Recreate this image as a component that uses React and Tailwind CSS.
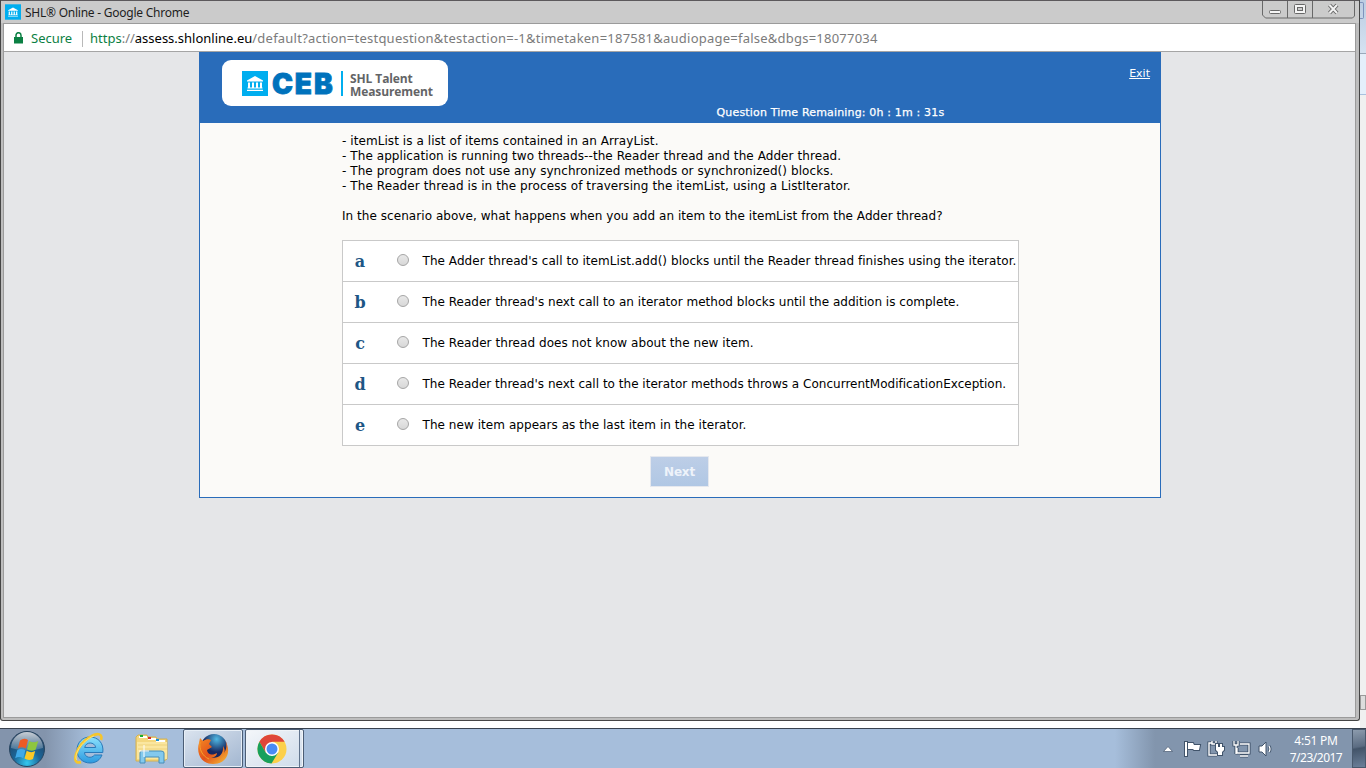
const options = [
  ['a', "The Adder thread's call to itemList.add() blocks until the Reader thread finishes using the iterator.", 'tracking-[0.055px]'],
  ['b', "The Reader thread's next call to an iterator method blocks until the addition is complete.", 'tracking-[0.020px]'],
  ['c', 'The Reader thread does not know about the new item.', 'tracking-[0.050px]'],
  ['d', "The Reader thread's next call to the iterator methods throws a ConcurrentModificationException.", 'tracking-[0.015px]'],
  ['e', 'The new item appears as the last item in the iterator.', 'tracking-[0.055px]'],
];

const facts = [
  ['- itemList is a list of items contained in an ArrayList.', 'tracking-[0.070px]'],
  ['- The application is running two threads--the Reader thread and the Adder thread.', 'tracking-[0.075px]'],
  ['- The program does not use any synchronized methods or synchronized() blocks.', 'tracking-[0.065px]'],
  ['- The Reader thread is in the process of traversing the itemList, using a ListIterator.', 'tracking-[0.090px]'],
];

function Temple({ className }) {
  return (
    <svg viewBox="0 0 26 25" className={className}>
      <rect width="26" height="25" fill="#00aeef" />
      <path d="M5 9.500 13 5l8 4.500v1H5zM6 11.500h2v5H6zM10 11.500h2v5h-2zM14 11.500h2v5h-2zM18 11.500h2v5h-2zM5.500 16.500h15v1h-15zM5 18.700h16v1.300H5z" fill="#fff" />
    </svg>
  );
}

function TitleBar() {
  return (
    <div className="flex h-[23px] shrink-0 items-start border-t border-[#5c595c] bg-[#cbcbcb] pl-[4px]">
      <Temple className="mt-[3px] h-4 w-4" />
      <span className="ml-[4px] mt-[3px] font-['Noto_Sans'] text-[12px] leading-[17px] tracking-[-0.240px] text-[#1e1e1e] whitespace-nowrap">SHL® Online - Google Chrome</span>
      <svg className="ml-auto mr-[3px] h-[18px] w-[94px]" viewBox="0 0 94 18" fill="none" stroke="#686868">
        <path d="M.5 0v14l3 3h87l2-2V0M25.500 0v17M50.500 0v17" />
        <rect x="7.500" y="9.500" width="11" height="3" rx="1" fill="#f5f5f5" />
        <rect x="32.500" y="3.500" width="11" height="9" rx="1" fill="#f5f5f5" />
        <rect x="35.500" y="6.500" width="5" height="3" fill="#ccc" />
        <path d="m67.500 4 7.500 8m0-8-7.500 8" strokeWidth="4" />
        <path d="m67.500 4 7.500 8m0-8-7.500 8" stroke="#f3f3f3" strokeWidth="2" />
      </svg>
    </div>
  );
}

function AddressBar() {
  return (
    <div className="flex h-[27px] shrink-0 items-center bg-white pl-[10px] pt-[2px] font-['Noto_Sans'] text-[13px]">
      <svg className="mb-px h-[12px] w-[9px]" viewBox="0 0 9 12"><path d="M0 5h9v6.500H0z" fill="#0b8043" /><path d="M2 5V3.200a2.500 2.500 0 0 1 5 0V5" fill="none" stroke="#0b8043" strokeWidth="1.500" /></svg>
      <span className="ml-[8px] w-[42px] text-[#0b8043]">Secure</span>
      <span className="ml-[9px] h-4 w-px bg-[#b9b9b9]" />
      <span className="ml-[7px] text-[#7b7b7b] whitespace-nowrap">
        <span className="text-[#0b8043]">https</span>://<span className="text-black">assess.shlonline.eu</span><span className="tracking-[0.230px]">/default?action=testquestion&amp;testaction=-1&amp;timetaken=187581&amp;audiopage=false&amp;dbgs=18077034</span>
      </span>
    </div>
  );
}

function Header() {
  return (
    <div className="flex h-[71px] items-start bg-[#296cba] pl-[23px] pr-[11px] text-white">
      <div className="mt-[8px] flex h-[46px] w-[226px] shrink-0 items-center rounded-[9px] bg-white pl-5">
        <Temple className="h-[25px] w-[26px]" />
        <span className="ml-[4px] mt-[3px] w-[62px] font-[Inter] text-[28px] font-black leading-[25px] tracking-[1.900px] text-[#0072bc] [-webkit-text-stroke:0.8px_#0072bc]">CEB</span>
        <span className="ml-[7px] h-[25px] w-[2px] bg-[#00aeef]" />
        <span className="ml-[7px] mt-[4px] flex flex-col font-['Open_Sans'] text-[12px] font-bold leading-[13px] tracking-[-0.100px] text-[#636466]"><span>SHL Talent</span><span>Measurement</span></span>
      </div>
      <div className="ml-[268.500px] mt-[54px] font-['DejaVu_Sans'] text-[11px] leading-[14px] tracking-[0.165px] whitespace-nowrap [-webkit-text-stroke:0.25px_white]">Question Time Remaining: 0h : 1m : 31s</div>
      <a className="ml-auto mt-[15px] font-['DejaVu_Sans'] text-[11px] leading-[14px] underline">Exit</a>
    </div>
  );
}

function Question() {
  return (
    <div className="w-[962px] border border-t-0 border-[#296cba] bg-[#fbfaf8]">
      <div className="-mx-px"><Header /></div>
      <div className="flex h-[374px] flex-col items-start pl-[142px] pt-[11px] font-['DejaVu_Sans'] text-[12px] leading-[15px] text-black">
        {facts.map(([f, spacing]) => <p key={f} className={`whitespace-nowrap ${spacing}`}>{f}</p>)}
        <p className="mt-[15px] whitespace-nowrap tracking-[0.050px]">In the scenario above, what happens when you add an item to the itemList from the Adder thread?</p>
        <div className="mt-[16px] w-[677px] border border-b-0 border-[#c9c9c9] bg-white">
          {options.map(([k, t, spacing]) => (
            <div key={k} className="flex h-[41px] items-center border-b border-[#c9c9c9]">
              <b className="w-[34px] text-center font-['DejaVu_Serif'] text-[16px] text-[#1d5685]">{k}</b>
              <span className="mb-[2px] ml-[20px] h-[12px] w-[12px] rounded-full border border-[#a5a5a5] bg-linear-to-b from-[#e8e8e8] to-[#d8d8d8]" />
              <span className={`ml-[13.500px] whitespace-nowrap ${spacing}`}>{t}</span>
            </div>
          ))}
        </div>
        <button className="ml-[308px] mt-[10px] h-[31px] w-[59px] border border-[#e5e8ee] bg-linear-to-b from-[#bdcee7] to-[#b0c7e4] pt-[2px] text-[12px] font-bold tracking-[-0.200px] text-[#eef3fa]">Next</button>
      </div>
    </div>
  );
}

function StartOrb() {
  return (
    <svg className="ml-[8px] h-[38px] w-[38px]" viewBox="0 0 38 38">
      <defs>
        <radialGradient id="orb" cx=".5" cy=".9" r=".85"><stop offset="0" stopColor="#35c8ef" /><stop offset=".45" stopColor="#1b6597" /><stop offset="1" stopColor="#233f60" /></radialGradient>
        <linearGradient id="gloss" x2="0" y2="1"><stop stopColor="#fff" stopOpacity=".75" /><stop offset="1" stopColor="#fff" stopOpacity=".15" /></linearGradient>
      </defs>
      <circle cx="19" cy="19" r="17.500" fill="url(#orb)" stroke="#284560" />
      <path d="M3 18a16 16 0 0 1 32 0q-16 5-32 0" fill="url(#gloss)" />
      <path d="M12 10.500q4-3 8-.5l-2.200 8.500q-4-2.500-8 0z" fill="#ed5a24" />
      <path d="M21.200 11q4.500 2.500 9 0l-2.500 8.500q-4.500 2.500-8.700-.3z" fill="#8ec63f" />
      <path d="M9.200 20.200q4-2.500 8.200 0l-2.200 8q-4-2.500-8 0z" fill="#3fa9e8" />
      <path d="M18.700 20.800q4.300 2.500 8.500.3l-2.200 8q-4.300 2.200-8.500-.5z" fill="#fbc926" />
    </svg>
  );
}

function Explorer() {
  return (
    <svg className="ml-[26px] h-[34px] w-[36px]" viewBox="0 0 36 34">
      <defs><linearGradient id="ie" x2="0" y2="1"><stop stopColor="#8be1fc" /><stop offset="1" stopColor="#2c9ae0" /></linearGradient></defs>
      <path fillRule="evenodd" d="M18 5C10 5 5 11 5 18c0 8 6 13 13 13 6 0 10-3 12-8h-7.500c-3 4-10 2.500-10-2.500h18.300C32 11 26 5 18 5m-5.300 10.500c1-6 10-6 11 0z" fill="url(#ie)" stroke="#2979b9" />
      <path d="M9 30C-2 34 4 13 18 5c8-5 13-3 11 3" fill="none" stroke="#f5c52c" strokeWidth="2.600" />
      <path d="M5 28C1 24 9 9 22 4" fill="none" stroke="#fff09b" strokeWidth=".7" />
    </svg>
  );
}

function Folder() {
  return (
    <svg className="ml-[27px] h-[32px] w-[34px]" viewBox="0 0 34 32">
      <path d="M1 4l2-2h9l1 2h8l1 2h10v20l-3 2H1z" fill="#f4d77d" stroke="#d3b151" />
      <path d="M4 4h8M13 6h8M21 8h9" stroke="#fff" strokeWidth="2" />
      <path d="M5 3h3" stroke="#1aae2d" strokeWidth="2" /><path d="M13 5h3" stroke="#d82b22" strokeWidth="2" /><path d="M21 7h3" stroke="#1691d8" strokeWidth="2" />
      <path d="M2 9h30v17H2z" fill="#fae69f" /><path d="M3 12h29M3 16h29" stroke="#eed27b" />
      <path d="M5 30V20q0-2 2-2h19q3 0 3 2v10h-5v-6H10v6z" fill="#83c9ed" stroke="#468eba" />
      <path d="M9 12v12M4 18h10" stroke="#fff" />
    </svg>
  );
}

function Firefox() {
  return (
    <svg className="h-8 w-8" viewBox="0 0 32 32">
      <defs><radialGradient id="globe" cx=".6" cy=".2"><stop stopColor="#50b9e4" /><stop offset="1" stopColor="#17275f" /></radialGradient><linearGradient id="fox" x2="1" y2="1"><stop stopColor="#f58b22" /><stop offset=".5" stopColor="#e2511b" /><stop offset="1" stopColor="#f7c437" /></linearGradient></defs>
      <circle cx="17" cy="14" r="13" fill="url(#globe)" />
      <path d="M3 5l3 3c3-2 6-2 8-1l-2 4 3 3-5 3c1 6 7 5 10 3 0 3-3 5-7 4 8 3 14-3 13-11 2 3 2 5 1 7 3-4 3-9 1-13 7 12 2 24-12 24C4 31-1 20 2 10z" fill="url(#fox)" />
      <path d="M3 9c-1 7 2 14 9 17" stroke="#f7a12c" fill="none" />
    </svg>
  );
}

function Chrome() {
  return (
    <svg className="h-[30px] w-[30px]" viewBox="0 0 30 30">
      <circle cx="15" cy="15" r="14.500" fill="#fcd04b" />
      <path d="M2.400 7.700A14.500 14.500 0 0 1 27.600 7.800H15L8.700 18.600z" fill="#df4639" />
      <path d="M2.400 7.700A14.500 14.500 0 0 0 14.500 29.500l6.700-11-12.500.1z" fill="#17a05c" />
      <circle cx="15" cy="15" r="7" fill="#fff" /><circle cx="15" cy="15" r="5.500" fill="#4a8bf4" />
    </svg>
  );
}

function Tray() {
  return (
    <svg className="h-[20px] w-[112px]" viewBox="0 0 112 20" fill="none">
      <path d="m.5 12.500 4.500-5 4.500 5z" fill="#fff" stroke="#475970" strokeWidth=".7" />
      <path d="M22 3h2v14h-2zM25 4h5l1 2h6l-1 5h-5l-1-1h-5z" fill="#fff" stroke="#40536a" strokeWidth="2" paintOrder="stroke" />
      <path d="M49 4h-3v12h8M49 2v3h4V2" stroke="#40536a" strokeWidth="3.200" />
      <path d="M49 4h-3v12h8M49 2v3h4V2" stroke="#fff" strokeWidth="1.400" />
      <path d="M53 5h2v3h2V5h2v3h2v3l-2 2v3h-4v-3l-2-2z" fill="#fff" stroke="#40536a" strokeWidth="2" paintOrder="stroke" />
      <path d="M77 5h9v9H74V9M77 17h8M71 2v4h4V2M73 6v9" stroke="#40536a" strokeWidth="3.200" />
      <path d="M77 5h9v9H74V9M77 17h8M71 2v4h4V2M73 6v9" stroke="#fff" strokeWidth="1.300" />
      <path d="M96 7h3l4-4v14l-4-4h-3z" fill="#fff" stroke="#40536a" />
      <path d="M106 7q2 3 0 6" stroke="#40536a" strokeWidth="3" /><path d="M106 7q2 3 0 6" stroke="#fff" strokeWidth="1.200" />
    </svg>
  );
}

function Taskbar() {
  return (
    <div className="flex h-10 w-full shrink-0 items-center border-t border-[#38424f] bg-[linear-gradient(to_right,#8394ac_0,#8394ac_45px,#a6bedb_90px,#a6bedb_1115px,#8295ad_1155px)]">
      <StartOrb /><Explorer /><Folder />
      <div className="ml-[14px] flex h-[39px] w-[60px] items-center justify-center rounded-[2px] border border-[#4b5d75] bg-linear-to-br from-[#dbe4ef] to-[#a2b6d0] shadow-[inset_0_0_0_1px_#e6eef6]"><Firefox /></div>
      <div className="ml-[2px] flex h-[39px] w-[59px] items-center rounded-[2px] border border-[#4b5d75] bg-linear-to-br from-[#f4f7fa] to-[#cedbea] shadow-[inset_0_0_0_1px_#f0f4f8]">
        <span className="flex w-[53px] justify-center pr-[2px]"><Chrome /></span><span className="h-full w-px bg-[#60738c]" />
      </div>
      <div className="ml-auto"><Tray /></div>
      <div className="ml-[11px] w-[60px] text-center font-['Noto_Sans'] text-[12px] leading-[17px] text-white whitespace-nowrap"><div className="tracking-[-0.250px]">4:51 PM</div><div className="tracking-[-0.500px]">7/23/2017</div></div>
      <div className="ml-[6px] h-full w-[14px] border border-[#49596d] bg-[linear-gradient(170deg,#8c9bad,#5b6c82_45%,#435469_50%,#6b7f99)]" />
    </div>
  );
}

export default function App() {
  return (
    <div className="flex h-[768px] w-[1366px] flex-col overflow-hidden bg-white">
      <div className="flex h-[728px]">
        <div className="flex w-[1360px] flex-col">
          <div className="flex h-[721px] flex-col rounded-b-[3px] border-b border-l border-r border-[#454545] bg-[#bdbdbd]">
            <TitleBar />
            <div className="ml-[2px] flex h-[695px] w-[1353px] flex-col border border-[#9b9b9b] bg-[#e5e6e8]">
              <AddressBar />
              <div className="flex grow flex-col items-start border-t border-[#a5a5a5] pl-[195px]"><Question /></div>
            </div>
          </div>
        </div>
        <div className="flex w-[6px] flex-col bg-[#f0f0f0]">
          <div className="h-[54px] border-b border-[#9aa9bb] bg-linear-to-b from-[#bccde2] to-[#d5e2f1] pt-[2px]">
            <div className="h-[17px] w-[4px] rounded-r-[2px] border border-l-0 border-[#7f93bd]" />
          </div>
          <div className="h-[41px] border-b border-[#a8c1df] bg-[#e4effb]" />
          <div className="mt-[600px] h-[15px] border border-[#999] bg-[#ddd]" />
        </div>
      </div>
      <Taskbar />
    </div>
  );
}
